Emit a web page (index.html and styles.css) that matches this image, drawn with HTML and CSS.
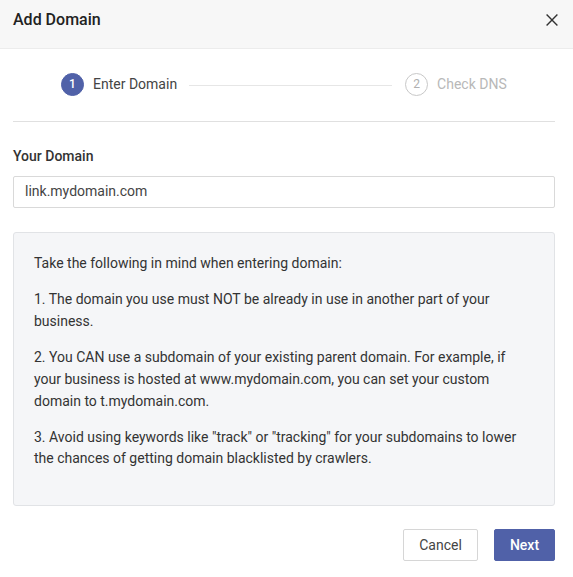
FILE: index.html
```html
<!DOCTYPE html>
<html>
<head>
<meta charset="utf-8">
<link rel="stylesheet" href="styles.css">
</head>
<body>
<div class="modal">
  <div class="header">
    <div class="title">Add Domain</div>
    <div class="close">
      <svg width="12" height="12" viewBox="0 0 12 12"><path d="M0.6 0.6 L11.4 11.4 M11.4 0.6 L0.6 11.4" stroke="#333" stroke-width="1.4" fill="none"/></svg>
    </div>
  </div>
  <div class="body">
    <div class="steps">
      <div class="step active"><span class="num">1</span><span class="label">Enter Domain</span></div>
      <div class="line"></div>
      <div class="step"><span class="num">2</span><span class="label">Check DNS</span></div>
    </div>
    <div class="divider"></div>
    <label class="field-label">Your Domain</label>
    <div class="input">link.mydomain.com</div>
    <div class="info">
      <p>Take the following in mind when entering domain:</p>
      <p>1. The domain you use must NOT be already in use in another part of your business.</p>
      <p>2. You CAN use a subdomain of your existing parent domain. For example, if your business is hosted at www.mydomain.com, you can set your custom domain to t.mydomain.com.</p>
      <p>3. Avoid using keywords like "track" or "tracking" for your subdomains to lower the chances of getting domain blacklisted by crawlers.</p>
    </div>
    <div class="actions">
      <button class="btn cancel">Cancel</button>
      <button class="btn next">Next</button>
    </div>
  </div>
</div>
</body>
</html>
```
FILE: styles.css
```css
* { box-sizing: border-box; }
html, body { margin: 0; padding: 0; background: #fff; }
body { font-family: Roboto, "Liberation Sans", sans-serif; color: #333; }
.modal { width: 573px; height: 577px; background: #fff; }
.header {
  height: 49px;
  background: #f7f7f7;
  border-bottom: 1px solid #ececec;
  display: flex;
  align-items: center;
  justify-content: space-between;
  padding: 0 15px 9px 13px;
}
.title { font-size: 16px; font-weight: 500; color: #222; }
.close { display: flex; align-items: center; }
.body { padding: 0 18px 0 13px; }
.steps {
  height: 72px;
  display: flex;
  align-items: center;
  padding: 0 0 2px 48px;
}
.step { display: flex; align-items: center; }
.num {
  width: 23px; height: 23px; border-radius: 50%;
  display: flex; align-items: center; justify-content: center;
  font-size: 12px;
  border: 1px solid #c8c8c8; color: #b0b0b0;
}
.step.active .num { background: #5061a8; border-color: #5061a8; color: #fff; font-weight: 500; }
.label { margin-left: 9px; font-size: 14px; color: #b8b8b8; }
.step.active .label { color: #444; }
.line { width: 203px; height: 1px; background: #e6e6e6; margin: 2px 13px 0 12px; }
.divider { height: 1px; background: #e0e0e0; }
.field-label {
  display: block;
  margin-top: 26px;
  font-size: 14px; font-weight: 500; color: #333;
  line-height: 17px;
}
.input {
  margin-top: 11px;
  height: 32px;
  border: 1px solid #d9d9d9;
  border-radius: 2px;
  padding: 0 11px 2px;
  font-size: 14px; color: #444;
  display: flex; align-items: center;
}
.info {
  margin-top: 24px;
  background: #f5f6f8;
  border: 1px solid #e1e3e6;
  border-radius: 3px;
  padding: 20px 20px 20px 20px;
  height: 274px;
}
.info p { margin: 0 0 14.5px; font-size: 14px; line-height: 21.7px; color: #333; }
.actions {
  display: flex;
  justify-content: flex-end;
  gap: 16px;
  margin-top: 23px;
}
.btn {
  height: 32px;
  font-family: Roboto, "Liberation Sans", sans-serif;
  font-size: 14px;
  border-radius: 2px;
  cursor: pointer;
}
.cancel { width: 75px; background: #fff; border: 1px solid #d6d6d6; color: #444; }
.next { width: 61px; background: #5061a8; border: 1px solid #5061a8; color: #fff; font-weight: 500; }
```
